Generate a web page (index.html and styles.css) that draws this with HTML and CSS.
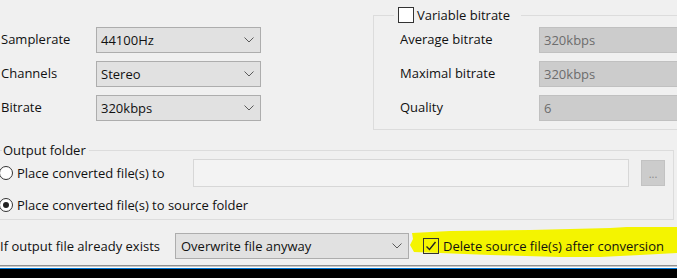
FILE: index.html
```html
<!DOCTYPE html>
<html>
<head>
<meta charset="utf-8">
<title>Conversion settings</title>
<link rel="stylesheet" href="styles.css">
</head>
<body>
<div class="dialog">
    <div class="top">
        <div class="basic">
            <div class="lbl">Samplerate</div>
            <div class="combo">44100Hz<svg class="chev" width="10" height="6" viewBox="0 0 10 6"><path d="M0.5 0.5 L5 5 L9.5 0.5" fill="none" stroke="#5a5a5a"/></svg></div>
            <div class="lbl">Channels</div>
            <div class="combo">Stereo<svg class="chev" width="10" height="6" viewBox="0 0 10 6"><path d="M0.5 0.5 L5 5 L9.5 0.5" fill="none" stroke="#5a5a5a"/></svg></div>
            <div class="lbl">Bitrate</div>
            <div class="combo">320kbps<svg class="chev" width="10" height="6" viewBox="0 0 10 6"><path d="M0.5 0.5 L5 5 L9.5 0.5" fill="none" stroke="#5a5a5a"/></svg></div>
        </div>
        <fieldset class="vbr">
            <legend class="vbr_legend"><span class="check"></span>Variable bitrate</legend>
            <div class="vbr_grid">
                <div class="lbl">Average bitrate</div>
                <div class="field disabled">320kbps</div>
                <div class="lbl">Maximal bitrate</div>
                <div class="field disabled">320kbps</div>
                <div class="lbl">Quality</div>
                <div class="field disabled">6</div>
            </div>
        </fieldset>
    </div>

    <fieldset class="output">
        <legend class="out_legend">Output folder</legend>
        <div class="out_row first">
            <span class="radio"></span>
            <span class="out_label">Place converted file(s) to</span>
            <div class="path"></div>
            <div class="browse">...</div>
        </div>
        <div class="out_row second">
            <span class="radio on"></span>
            <span>Place converted file(s) to source folder</span>
        </div>
    </fieldset>

    <div class="bottom">
        <span class="exists_label">If output file already exists</span>
        <div class="combo wide">Overwrite file anyway<svg class="chev" width="10" height="6" viewBox="0 0 10 6"><path d="M0.5 0.5 L5 5 L9.5 0.5" fill="none" stroke="#5a5a5a"/></svg></div>
        <svg class="marker" width="268" height="40" viewBox="0 0 268 40">
            <path d="M2 6 L40 4 L120 3 L200 1 L267 -3 L267 26 L230 28 L190 30 L150 30 L80 28 L30 26 L4 25 L0 18 L3 12 Z" fill="#f4f400"/>
        </svg>
        <span class="check checked"><svg width="14" height="14" viewBox="0 0 14 14"><path d="M2.5 7.5 L5.5 10.5 L11.5 3" fill="none" stroke="#222" stroke-width="1.4"/></svg></span>
        <span class="delete_label">Delete source file(s) after conversion</span>
    </div>
</div>
<div class="bar"></div>
</body>
</html>
```
FILE: styles.css
```css
html, body {
    margin: 0;
    padding: 0;
}
body {
    width: 677px;
    height: 278px;
    overflow: hidden;
    background-color: #000;
    font-family: "Open Sans", "Noto Sans", sans-serif;
    font-size: 13px;
    color: #111;
}
.dialog {
    background-color: #f0f0f0;
    height: 265px;
    overflow: hidden;
}
.top {
    display: flex;
    align-items: flex-start;
    height: 131px;
}
.basic {
    display: grid;
    grid-template-columns: 95px 165px;
    grid-template-rows: 26px 26px 26px;
    row-gap: 8px;
    align-items: center;
    margin-top: 27px;
    padding-left: 1px;
}
.lbl {
    line-height: 16px;
    margin-top: -2px;
}
.combo {
    position: relative;
    box-sizing: border-box;
    height: 26px;
    line-height: 24px;
    padding-left: 4px;
    background-color: #e1e1e1;
    border: 1px solid #adadad;
}
.chev {
    position: absolute;
    right: 6px;
    top: 9px;
}
.vbr {
    box-sizing: border-box;
    margin: 7px 0 0 112px;
    padding: 4px 0 8px 26px;
    width: 340px;
    flex-shrink: 0;
    border: 1px solid #dcdcdc;
    border-right: none;
}
.vbr_legend {
    display: flex;
    align-items: center;
    margin-left: -6px;
    padding: 0 11px 0 4px;
    line-height: 16px;
}
.check {
    display: inline-flex;
    align-items: center;
    justify-content: center;
    box-sizing: border-box;
    width: 16px;
    height: 16px;
    margin-right: 3px;
    background-color: #fff;
    border: 1px solid #333;
}
.vbr_grid {
    display: grid;
    grid-template-columns: 139px 200px;
    grid-template-rows: 26px 26px 26px;
    row-gap: 8px;
    align-items: center;
}
.field {
    box-sizing: border-box;
    height: 26px;
    line-height: 24px;
    padding-left: 4px;
}
.disabled {
    background-color: #cccccc;
    border: 1px solid #c0c0c0;
    color: #6d6d6d;
}
.output {
    box-sizing: border-box;
    width: 674px;
    margin: 11px 0 0 0;
    padding: 0 0 4px 0;
    border: 1px solid #dcdcdc;
    border-left: none;
}
.out_legend {
    margin-left: 2px;
    padding: 0 3px 0 1px;
    line-height: 16px;
}
.out_row {
    display: flex;
    align-items: center;
}
.out_row.first {
    height: 28px;
    margin-top: 1px;
}
.out_row.second {
    height: 20px;
    margin-top: 8px;
}
.radio {
    box-sizing: border-box;
    width: 14px;
    height: 14px;
    margin: 0 4px 0 -1px;
    border: 1px solid #333;
    border-radius: 50%;
    background-color: #fff;
    display: flex;
    align-items: center;
    justify-content: center;
}
.radio.on::after {
    content: "";
    width: 6px;
    height: 6px;
    border-radius: 50%;
    background-color: #222;
}
.out_label {
    width: 176px;
}
.path {
    flex: 1;
    box-sizing: border-box;
    height: 28px;
    background-color: #f3f3f3;
    border: 1px solid #d7d7d7;
}
.browse {
    box-sizing: border-box;
    width: 24px;
    height: 26px;
    margin: 0 8px 0 12px;
    background-color: #cccccc;
    border: 1px solid #c2c2c2;
    color: #8a8a8a;
    text-align: center;
    line-height: 26px;
    font-size: 11px;
}
.bottom {
    position: relative;
    display: flex;
    align-items: center;
    height: 26px;
    margin-top: 13px;
}
.exists_label {
    width: 175px;
    white-space: nowrap;
}
.combo.wide {
    width: 234px;
    padding-left: 5px;
}
.marker {
    position: absolute;
    left: 410px;
    top: -6px;
}
.bottom .check {
    position: relative;
    margin-left: 14px;
    margin-right: 4px;
    background-color: transparent;
}
.delete_label {
    position: relative;
    white-space: nowrap;
}
.bar {
    height: 4px;
    background: linear-gradient(#909090 25%, #c9c9c9 25%, #c9c9c9 50%, #fff 50%, #fff 75%, #0078d7 75%);
}
```
